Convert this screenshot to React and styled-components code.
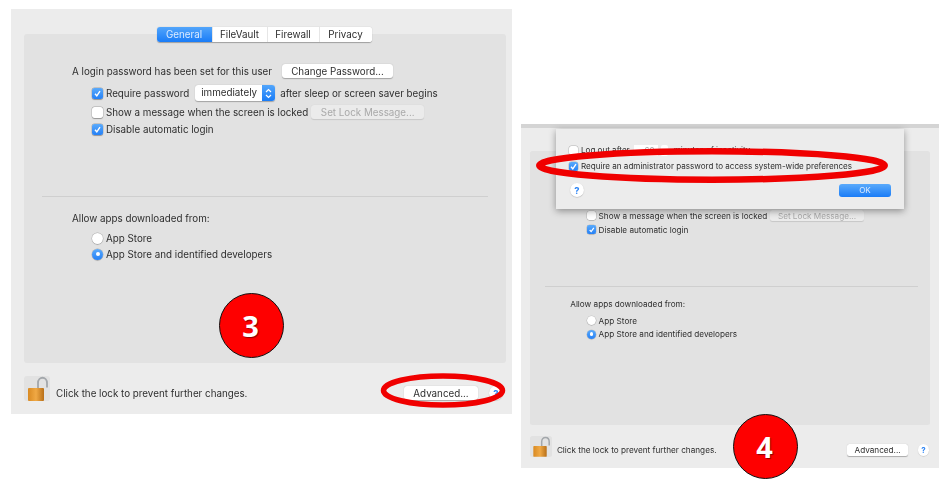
import React from "react";
import styled, { createGlobalStyle } from "styled-components";

const Global = createGlobalStyle`
  html, body { margin: 0; background: #fff; }
  body { font-family: "Inter", "Liberation Sans", sans-serif; color: #2e2e2e; }
`;

const Page = styled.div`
  position: relative;
  width: 950px;
  height: 504px;
  overflow: hidden;
  display: flex;
  align-items: flex-start;
  gap: 9px;
  padding: 9px 0 0 11px;
  box-sizing: border-box;
`;

const Slot = styled.div`
  position: relative;
  flex: none;
  margin-top: ${(p) => p.$top || 0}px;
`;

const Win = styled.section`
  zoom: ${(p) => p.$zoom};
  width: 501px;
  box-sizing: border-box;
  background: #ececec;
  padding: ${(p) => p.$padTop}px ${(p) => p.$padR}px 0 ${(p) => p.$padL}px;
  border-top: ${(p) => (p.$strip ? "5px solid #d4d4d4" : "0")};
  filter: blur(0.3px);
`;

const Panel = styled.div`
  height: 329px;
  background: #e2e2e2;
  border-radius: 3px;
  display: flex;
  flex-direction: column;
  padding-left: 48px;
  box-sizing: border-box;
`;

const Tabs = styled.div`
  display: flex;
  align-self: center;
  margin: -7px 0 0 -50px;
  height: 15px;
  background: #fff;
  border-radius: 3px;
  box-shadow: 0 0.5px 1px rgba(0, 0, 0, 0.3);
  overflow: hidden;
`;

const Tab = styled.div`
  width: ${(p) => p.$w}px;
  display: flex;
  align-items: center;
  justify-content: center;
  font-size: 9.8px;
  border-left: ${(p) => (p.$first ? "0" : "1px solid #e6e6e6")};
  box-sizing: border-box;
  color: ${(p) => (p.$on ? "#dcebff" : "#2e2e2e")};
  background: ${(p) => (p.$on ? "linear-gradient(#52a5fb, #1a7cf7)" : "#fff")};
`;

const Row = styled.div`
  display: flex;
  align-items: center;
  height: ${(p) => p.$h || 14}px;
  margin-top: ${(p) => p.$mt || 0}px;
  margin-left: ${(p) => p.$ml || 0}px;
  font-size: 9.8px;
  white-space: nowrap;
`;

const Btn = styled.div`
  flex: none;
  display: flex;
  align-items: center;
  justify-content: center;
  width: ${(p) => p.$w}px;
  height: 14px;
  margin-left: ${(p) => p.$ml || 0}px;
  background: ${(p) => (p.$off ? "#ebebeb" : "#fff")};
  color: ${(p) => (p.$off ? "#a9a9a9" : "#2e2e2e")};
  border-radius: 3px;
  box-shadow: 0 0.5px 1px rgba(0, 0, 0, ${(p) => (p.$off ? 0.12 : 0.28)});
  font-size: 9.8px;
`;

const Box = styled.span`
  flex: none;
  display: flex;
  align-items: center;
  justify-content: center;
  width: 11px;
  height: 11px;
  margin-right: 3px;
  border-radius: ${(p) => (p.$round ? "50%" : "2.5px")};
  background: ${(p) => (p.$on ? "linear-gradient(#5aaafb, #2480f6)" : "#fff")};
  box-shadow: 0 0 0 0.4px rgba(0, 0, 0, 0.22), 0 0.5px 1px rgba(0, 0, 0, 0.25);
`;

const Dot = styled.span`
  width: 4px;
  height: 4px;
  border-radius: 50%;
  background: #fff;
`;

const Select = styled.div`
  flex: none;
  display: flex;
  width: 80px;
  height: 16px;
  margin: 0 5px 0 6px;
  background: #fff;
  border-radius: 3px;
  box-shadow: 0 0.5px 1px rgba(0, 0, 0, 0.28);
  overflow: hidden;
`;

const SelectText = styled.span`
  flex: 1;
  padding-left: 6px;
  line-height: 16px;
`;

const Stepper = styled.span`
  width: 13px;
  display: flex;
  align-items: center;
  justify-content: center;
  background: linear-gradient(#52a5fb, #1a7cf7);
`;

const Divider = styled.div`
  width: 446px;
  height: 1px;
  margin: 60px 0 0 -30px;
  background: #cfcfcf;
`;

const Footer = styled.footer`
  display: flex;
  align-items: flex-start;
  height: ${(p) => p.$h}px;
  padding-top: ${(p) => p.$lockTop}px;
  box-sizing: border-box;
  font-size: 9.8px;
`;

const LockTile = styled.span`
  flex: none;
  display: flex;
  width: 26px;
  height: 25px;
  margin-right: 6px;
  border-radius: 3px;
  background: #e2e2e2;
`;

const FooterText = styled.span`
  flex: 1;
  margin-top: 11px;
  line-height: 14px;
`;

const FooterActions = styled.div`
  flex: none;
  display: flex;
  align-items: center;
  margin-top: 10px;
`;

const Help = styled.span`
  flex: none;
  display: flex;
  align-items: center;
  justify-content: center;
  width: 14px;
  height: 14px;
  margin-left: ${(p) => p.$ml || 0}px;
  margin-right: ${(p) => p.$mr || 0}px;
  border-radius: 50%;
  background: #fff;
  color: #2f86f5;
  font-size: 9.5px;
  font-weight: 700;
  box-shadow: 0 0.5px 1px rgba(0, 0, 0, 0.25);
`;

const Sheet = styled.div`
  position: absolute;
  left: 35px;
  top: 5px;
  width: 348px;
  height: 80px;
  box-sizing: border-box;
  padding: 14px 13px 0 13px;
  background: #ececec;
  box-shadow: 0 2px 7px rgba(0, 0, 0, 0.38);
  filter: blur(0.3px);
`;

const SheetRow = styled.div`
  display: flex;
  align-items: center;
  height: 14px;
  margin-top: ${(p) => p.$mt || 0}px;
  font-size: 8.07px;
  white-space: nowrap;
`;

const SmallBox = styled(Box)`
  width: 9px;
  height: 9px;
  margin-right: 3px;
`;

const Field = styled.span`
  width: 24px;
  height: 11px;
  margin-left: 4px;
  background: #fff;
  color: #a5a5a5;
  text-align: right;
  line-height: 11px;
  padding-right: 3px;
  box-sizing: border-box;
`;

const FieldStepper = styled.span`
  width: 7px;
  height: 11px;
  margin: 0 6px 0 3px;
  border-radius: 2px;
  background: #fff;
`;

const SheetFoot = styled.div`
  display: flex;
  align-items: center;
  justify-content: space-between;
  margin: 10px 0 0 1px;
`;

const OK = styled.div`
  width: 52px;
  height: 13px;
  display: flex;
  align-items: center;
  justify-content: center;
  border-radius: 3px;
  background: linear-gradient(#5aaafb, #1a7cf7);
  color: #dcebff;
  font-size: 8.07px;
`;

const Ring = styled.svg`
  position: absolute;
  left: ${(p) => p.$x}px;
  top: ${(p) => p.$y}px;
  overflow: visible;
`;

const Badge = styled.div`
  position: absolute;
  left: ${(p) => p.$x}px;
  top: ${(p) => p.$y}px;
  width: 65px;
  height: 65px;
  box-sizing: border-box;
  display: flex;
  align-items: center;
  justify-content: center;
  padding-right: 2px;
  border-radius: 50%;
  border: 1.5px solid #111;
  background: #fe0000;
  color: #fff;
  font-family: "Open Sans", "Liberation Sans", sans-serif;
  font-weight: 700;
  font-size: 29px;
  text-shadow: 1px 1px 1px rgba(90, 0, 0, 0.7);
`;

const Check = () => (
  <svg width="9" height="9" viewBox="0 0 9 9">
    <path d="M2 4.8 L3.8 6.8 L7 2.2" fill="none" stroke="#fff" strokeWidth="1.4" />
  </svg>
);

const Chevrons = () => (
  <svg width="9" height="13" viewBox="0 0 9 13">
    <path d="M2 5 L4.5 2.5 L7 5 M2 8 L4.5 10.5 L7 8" fill="none" stroke="#fff" strokeWidth="1.2" />
  </svg>
);

const Lock = ({ id }) => (
  <svg width="26" height="25" viewBox="0 0 26 25">
    <defs>
      <linearGradient id={id} x1="0" x2="1" y1="0" y2="0">
        <stop offset="0" stopColor="#d98a22" />
        <stop offset="0.5" stopColor="#f0a945" />
        <stop offset="1" stopColor="#b86f18" />
      </linearGradient>
    </defs>
    <path d="M14 13 V7 C14 0 23 0 23 7 V11.5" fill="none" stroke="#a3a7ab" strokeWidth="1.8" />
    <rect x="4" y="12" width="16" height="13" rx="1" fill={`url(#${id})`} />
  </svg>
);

const Choice = ({ on, round, children, ...rest }) => (
  <Row $ml={20} {...rest}>
    <Box $on={on} $round={round}>
      {on && (round ? <Dot /> : <Check />)}
    </Box>
    {children}
  </Row>
);

const Prefs = ({ id, zoom, padTop, padL, padR, strip, footH, helpMr }) => (
  <Win $zoom={zoom} $padTop={padTop} $padL={padL} $padR={padR} $strip={strip}>
    <Panel>
      <Tabs>
        <Tab $w={55} $first $on>General</Tab>
        <Tab $w={55}>FileVault</Tab>
        <Tab $w={52}>Firewall</Tab>
        <Tab $w={53}>Privacy</Tab>
      </Tabs>
      <Row $mt={22}>
        A login password has been set for this user
        <Btn $w={111} $ml={10}>Change Password...</Btn>
      </Row>
      <Choice on $h={16} $mt={7}>
        Require password
        <Select>
          <SelectText>immediately</SelectText>
          <Stepper><Chevrons /></Stepper>
        </Select>
        after sleep or screen saver begins
      </Choice>
      <Choice $mt={4}>
        Show a message when the screen is locked
        <Btn $w={113} $ml={3} $off>Set Lock Message...</Btn>
      </Choice>
      <Choice on $mt={3}>Disable automatic login</Choice>
      <Divider />
      <Row $mt={14}>Allow apps downloaded from:</Row>
      <Choice round $mt={6}>App Store</Choice>
      <Choice round on $mt={2}>App Store and identified developers</Choice>
    </Panel>
    <Footer $h={footH} $lockTop={13}>
      <LockTile><Lock id={id} /></LockTile>
      <FooterText>Click the lock to prevent further changes.</FooterText>
      <FooterActions>
        <Btn $w={74}>Advanced...</Btn>
        <Help $ml={11} $mr={helpMr}>?</Help>
      </FooterActions>
    </Footer>
  </Win>
);

export default function App() {
  return (
    <Page>
      <Global />
      <Slot>
        <Prefs id="brassA" zoom={1} padTop={25} padL={13} padR={6} footH={51} helpMr={3} />
      </Slot>
      <Slot $top={115}>
        <Prefs id="brassB" zoom={0.835} padTop={27} padL={11} padR={11} strip footH={51} helpMr={1} />
        <Sheet>
          <SheetRow>
            <SmallBox />
            Log out after
            <Field>60</Field>
            <FieldStepper />
            minutes of inactivity
          </SheetRow>
          <SheetRow $mt={2}>
            <SmallBox $on><Check /></SmallBox>
            Require an administrator password to access system-wide preferences
          </SheetRow>
          <SheetFoot>
            <Help>?</Help>
            <OK>OK</OK>
          </SheetFoot>
        </Sheet>
      </Slot>
      <Ring $x={381} $y={373} width="124" height="35" viewBox="0 0 124 35">
        <ellipse cx="62" cy="17.5" rx="59.5" ry="14.5" fill="none" stroke="#f00000" strokeWidth="5.5" />
      </Ring>
      <Ring $x={536} $y={148} width="352" height="35" viewBox="0 0 352 35">
        <ellipse cx="176" cy="17.5" rx="172.7" ry="14.2" fill="none" stroke="#f00000" strokeWidth="6.5" />
      </Ring>
      <Badge $x={219} $y={293}>3</Badge>
      <Badge $x={733} $y={414}>4</Badge>
    </Page>
  );
}
